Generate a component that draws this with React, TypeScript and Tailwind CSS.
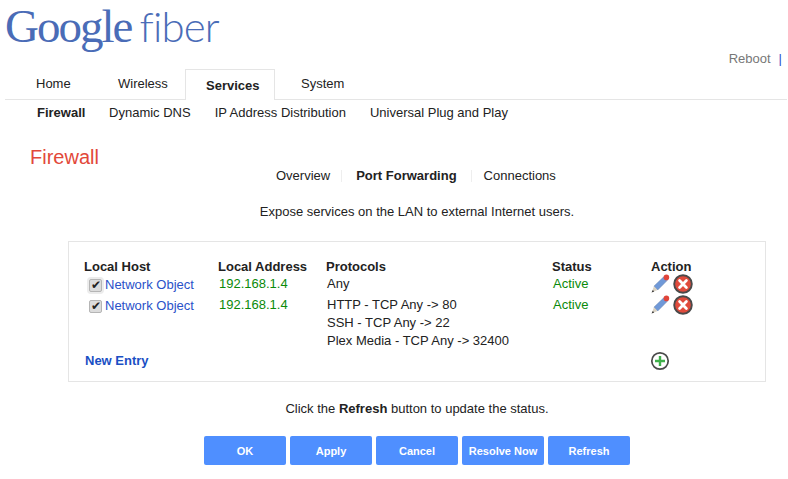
import { Fragment } from "react";

const GRID = "grid grid-cols-[134px_108px_226px_99px_1fr]";

function PencilIcon() {
  return (
    <svg width="20" height="20" viewBox="0 0 20 20">
      <path d="M4 12.2 L13.6 3 L17 6.6 L7.6 16 Z" fill="#7099d8" stroke="#5a7cb0" strokeWidth="0.6" />
      <path d="M4 12.2 L7.6 16 L1.6 18.6 Z" fill="#d9d2c4" />
      <path d="M1.6 18.6 L2.8 16 L4.2 17.4 Z" fill="#333" />
      <circle cx="16.4" cy="3.4" r="2.8" fill="#e0453a" />
    </svg>
  );
}

function DeleteIcon() {
  return (
    <svg width="20" height="20" viewBox="0 0 20 20">
      <circle cx="10" cy="10" r="8.8" fill="#e04b3c" stroke="#4a4a4a" strokeWidth="1.9" />
      <path d="M6.6 6.6 L13.4 13.4 M13.4 6.6 L6.6 13.4" stroke="#fff" strokeWidth="2.8" strokeLinecap="round" />
    </svg>
  );
}

function AddIcon() {
  return (
    <svg width="20" height="20" viewBox="0 0 20 20">
      <circle cx="10" cy="10" r="8.2" fill="#fff" stroke="#4a4a4a" strokeWidth="1.7" />
      <path d="M10 5 V15 M5 10 H15" stroke="#3fb04a" strokeWidth="2.4" />
    </svg>
  );
}

function HostCell({ focused }: { focused: boolean }) {
  return (
    <div className="flex items-center h-[18px] pl-[5px] gap-[3px]">
      <span
        className={`flex items-center justify-center w-[13px] h-[13px] rounded-[2px] bg-[#dcdcdc] border border-[#b5b5b5] text-[#222] text-[12px] leading-none ${
          focused ? "ring-2 ring-[#ececec]" : ""
        }`}
      >
        ✔
      </span>
      <span className="text-[#2a52c9]">Network Object</span>
    </div>
  );
}

function ActionCell() {
  return (
    <div className="flex items-center h-[20px] -mt-[2px] -ml-[1px] gap-[3px]">
      <PencilIcon />
      <DeleteIcon />
    </div>
  );
}

const rows = [
  { protocols: ["Any"], h: "h-[21px]" },
  {
    protocols: ["HTTP - TCP Any -> 80", "SSH - TCP Any -> 22", "Plex Media - TCP Any -> 32400"],
    h: "h-[54px]",
  },
];

export default function App() {
  return (
    <div className="w-[788px] h-[479px] overflow-hidden bg-white text-[13px] leading-[18px] text-[#222] font-['Liberation_Sans',Arial,sans-serif]">
      {/* logo + reboot */}
      <div className="flex justify-between items-start h-[69px] pr-[6px]">
        <div className="flex items-baseline pl-[5px] pt-[1px] text-[#4a6cb7] leading-[50px]">
          <span className="text-[47px] tracking-[-2px] font-['Liberation_Serif',serif]">Google</span>
          <span className="text-[42px] ml-[8px] tracking-[-0.8px] font-light font-['Lato',sans-serif]">fiber</span>
        </div>
        <div className="mt-[50px] text-[#777]">
          Reboot<span className="ml-[8px] text-[#2a52c9]">|</span>
        </div>
      </div>

      {/* main tabs */}
      <div className="flex ml-[5px] mr-[1px] h-[31px] pl-[13px] border-b border-[#e5e5e5]">
        <div className="w-[82px] pl-[18px] pt-[6px]">Home</div>
        <div className="w-[85px] pl-[18px] pt-[6px]">Wireless</div>
        <div className="w-[90px] h-[31px] pl-[20px] pt-[7px] font-bold bg-white border border-b-0 border-[#e5e5e5]">Services</div>
        <div className="pl-[26px] pt-[6px]">System</div>
      </div>

      {/* sub nav */}
      <div className="flex gap-[24px] pl-[37px] pt-[4px] h-[26px]">
        <span className="font-bold -mr-[0.4px]">Firewall</span>
        <span>Dynamic DNS</span>
        <span>IP Address Distribution</span>
        <span>Universal Plug and Play</span>
      </div>

      <h1 className="pl-[30px] mt-[18px] text-[20px] leading-[26px] text-[#e2483a]">Firewall</h1>

      {/* page tabs */}
      <div className="flex items-center h-[18px] mt-[-3px] pl-[276px]">
        <span>Overview</span>
        <span className="w-[1px] h-[12px] ml-[11px] mr-[14px] bg-[#eeeeee]" />
        <span className="font-bold">Port Forwarding</span>
        <span className="w-[1px] h-[12px] ml-[14px] mr-[12px] bg-[#eeeeee]" />
        <span>Connections</span>
      </div>

      <p className="mt-[18px] pl-[46px] text-center">Expose services on the LAN to external Internet users.</p>

      {/* rules table */}
      <div className="mt-[20px] ml-[68px] w-[698px] h-[141px] pl-[15px] pt-[16px] border border-[#e5e5e5]">
        <div className={`${GRID} font-bold h-[18px]`}>
          <div>Local Host</div>
          <div>Local Address</div>
          <div>Protocols</div>
          <div>Status</div>
          <div>Action</div>
        </div>
        <div className={GRID}>
          {rows.map((row, i) => (
            <Fragment key={i}>
              <div className={row.h}>
                <HostCell focused={i === 0} />
              </div>
              <div className="pl-[1px] text-[#0a8a0a] -mt-[1px]">192.168.1.4</div>
              <div className="pl-[1px] -mt-[1px]">
                {row.protocols.map((p) => (
                  <div key={p}>{p}</div>
                ))}
              </div>
              <div className="pl-[1px] text-[#0a8a0a] -mt-[1px]">Active</div>
              <ActionCell />
            </Fragment>
          ))}
        </div>
        <div className={`${GRID} items-center h-[20px]`}>
          <div className="col-span-4 pl-[1px] font-bold text-[#1a4fc4]">New Entry</div>
          <div className="-ml-[1px]">
            <AddIcon />
          </div>
        </div>
      </div>

      <p className="mt-[18px] pl-[46px] text-center">
        Click the <b>Refresh</b> button to update the status.
      </p>

      <div className="flex gap-[4px] mt-[18px] pl-[204px]">
        {["OK", "Apply", "Cancel", "Resolve Now", "Refresh"].map((label) => (
          <button key={label} className="w-[82px] h-[29px] rounded-[2px] bg-[#4f8fff] text-white text-[11px] font-bold">
            {label}
          </button>
        ))}
      </div>
    </div>
  );
}
